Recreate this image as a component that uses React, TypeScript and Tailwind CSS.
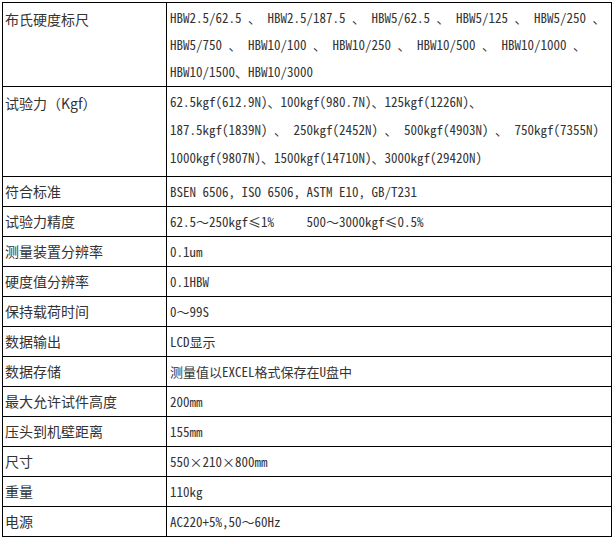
/**
 * 布氏硬度计 技术参数表
 */
const labelFont = {
  fontFamily: '"Noto Sans CJK SC", "Noto Sans", sans-serif',
};
const valueFont = {
  fontFamily:
    '"Noto Sans Mono CJK SC", "Liberation Mono", "Noto Sans CJK SC", monospace',
};

// 表の行データ: [項目名, 値の各行]
const rows: { label: string; lines: string[]; cellClass?: string }[] = [
  {
    label: '布氏硬度标尺',
    lines: [
      'HBW2.5/62.5 、 HBW2.5/187.5 、 HBW5/62.5 、 HBW5/125 、 HBW5/250 、',
      'HBW5/750 、 HBW10/100 、 HBW10/250 、 HBW10/500 、 HBW10/1000 、',
      'HBW10/1500、HBW10/3000',
    ],
    cellClass: 'leading-[27px] pt-[1px] pb-[1px]',
  },
  {
    label: '试验力（Kgf）',
    lines: [
      '62.5kgf(612.9N)、100kgf(980.7N)、125kgf(1226N)、',
      '187.5kgf(1839N) 、 250kgf(2452N) 、 500kgf(4903N) 、 750kgf(7355N)',
      '1000kgf(9807N)、1500kgf(14710N)、3000kgf(29420N)',
    ],
    cellClass: 'leading-[28px] pt-[1px] pb-[4px]',
  },
  { label: '符合标准', lines: ['BSEN 6506, ISO 6506, ASTM E10, GB/T231'] },
  {
    label: '试验力精度',
    lines: ['62.5～250kgf≤1%\u00a0\u00a0\u00a0\u00a0\u00a0500～3000kgf≤0.5%'],
  },
  { label: '测量装置分辨率', lines: ['0.1um'] },
  { label: '硬度值分辨率', lines: ['0.1HBW'] },
  { label: '保持载荷时间', lines: ['0～99S'] },
  { label: '数据输出', lines: ['LCD显示'] },
  { label: '数据存储', lines: ['测量值以EXCEL格式保存在U盘中'] },
  { label: '最大允许试件高度', lines: ['200mm'] },
  { label: '压头到机壁距离', lines: ['155mm'] },
  { label: '尺寸', lines: ['550×210×800mm'] },
  { label: '重量', lines: ['110kg'] },
  { label: '电源', lines: ['AC220+5%,50～60Hz'] },
];

export default function App() {
  return (
    <div className="w-[616px] h-[544px] bg-white pt-[2px] pl-[2px]">
      <table className="w-[610px] border-collapse border border-black text-[#333]">
        <tbody>
          {rows.map((row) => {
            const multi = row.lines.length > 1;
            return (
              <tr key={row.label}>
                <td
                  className={`w-[164px] border border-black pl-[2px] text-[14px] ${
                    multi ? 'align-top pt-[3px] leading-[27px]' : 'h-[30px] leading-[29px] align-middle'
                  }`}
                  style={labelFont}
                >
                  {row.label}
                </td>
                <td
                  className={`border border-black pl-[3px] text-[13px] whitespace-nowrap ${
                    multi ? `align-top ${row.cellClass}` : 'h-[30px] leading-[29px] align-middle'
                  }`}
                  style={valueFont}
                >
                  {row.lines.map((line, i) => (
                    <div key={i} className="overflow-hidden">
                      {line}
                    </div>
                  ))}
                </td>
              </tr>
            );
          })}
        </tbody>
      </table>
    </div>
  );
}
